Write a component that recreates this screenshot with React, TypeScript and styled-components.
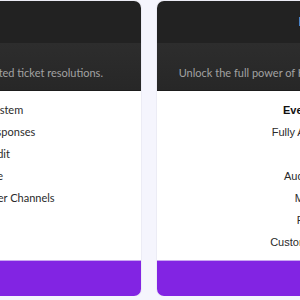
import * as React from 'react'
import styled, { createGlobalStyle } from 'styled-components'

const GlobalStyle = createGlobalStyle`
  html, body {
    margin: 0;
    padding: 0;
    background: #f5f5fd;
    overflow: hidden;
  }
`

const Row = styled.div`
  display: flex;
  gap: 16px;
  margin-left: -207px;
  padding-top: 1px;
`

const Card = styled.div`
  width: 348px;
  height: 295px;
  flex-shrink: 0;
  display: flex;
  flex-direction: column;
  background: #ffffff;
  border-radius: 7px;
  overflow: hidden;
  box-shadow: 0 0 0 1px #ececf5;
`

const Header = styled.div`
  height: 42px;
  box-sizing: border-box;
  padding-top: 13px;
  background: #222222;
  text-align: center;
`

const Title = styled.h3`
  margin: 0;
  font-family: 'Liberation Sans', Arial, sans-serif;
  font-size: 13px;
  line-height: 16px;
  font-weight: 700;
  color: #f4f4f4;
`

const Band = styled.div`
  height: 48px;
  box-sizing: border-box;
  padding-top: 23px;
  background: linear-gradient(#2d2d2d, #272727);
  border-bottom: 1px solid #1d1d1d;
  text-align: center;
`

const Subtitle = styled.p`
  margin: 0;
  font-family: Lato, 'Open Sans', sans-serif;
  font-size: 11px;
  line-height: 13px;
  color: #a2a2a2;
  white-space: nowrap;
`

const Features = styled.ul<{ $geometric?: boolean }>`
  list-style: none;
  margin: 0;
  padding: 8px 0 0;
  display: flex;
  flex-direction: column;
  align-items: center;
  font-family: ${p => (p.$geometric ? "Lato, 'Open Sans', sans-serif" : "'Liberation Sans', Arial, sans-serif")};
  font-size: 11px;
  color: #2a2a2a;
`

const Feature = styled.li<{ $bold?: boolean }>`
  height: 22px;
  line-height: 22px;
  white-space: nowrap;
  font-weight: ${p => (p.$bold ? 700 : 400)};
  color: ${p => (p.$bold ? '#111111' : 'inherit')};
`

const Action = styled.button`
  margin-top: auto;
  height: 36px;
  border: none;
  border-top: 1px solid #c9a6f2;
  background: #8224e3;
  color: #ffffff;
  font-family: 'Liberation Sans', Arial, sans-serif;
  font-size: 12px;
  font-weight: 700;
  cursor: pointer;
`

type Plan = {
  name: string
  blurb: string
  geometric?: boolean
  features: { label: string; bold?: boolean }[]
  cta: string
}

const plans: Plan[] = [
  {
    name: 'Free',
    blurb: 'Start free with AI-powered automated ticket resolutions.',
    geometric: true,
    features: [
      { label: 'Smart Ticketing System' },
      { label: 'Automated Email Responses' },
      { label: 'Monthly AI Credit' },
      { label: 'Email Template' },
      { label: 'Integrations with All Other Channels' },
    ],
    cta: 'Start',
  },
  {
    name: 'Enterprise',
    blurb: 'Unlock the full power of Kayako with unlimited AI automations.',
    features: [
      { label: 'Everything in Free', bold: true },
      { label: 'Fully Automated Replies' },
      { label: 'AI Insights' },
      { label: 'Audit Log & History' },
      { label: 'Macros & Tags' },
      { label: 'Full Reporting' },
      { label: 'Custom Branding & SSO' },
    ],
    cta: 'Upgrade',
  },
]

export default function App() {
  return (
    <>
      <GlobalStyle />
      <Row>
        {plans.map(plan => (
          <Card key={plan.name}>
            <Header>
              <Title>{plan.name}</Title>
            </Header>
            <Band>
              <Subtitle>{plan.blurb}</Subtitle>
            </Band>
            <Features $geometric={plan.geometric}>
              {plan.features.map(f => (
                <Feature key={f.label} $bold={f.bold}>
                  {f.label}
                </Feature>
              ))}
            </Features>
            <Action>{plan.cta}</Action>
          </Card>
        ))}
      </Row>
    </>
  )
}
